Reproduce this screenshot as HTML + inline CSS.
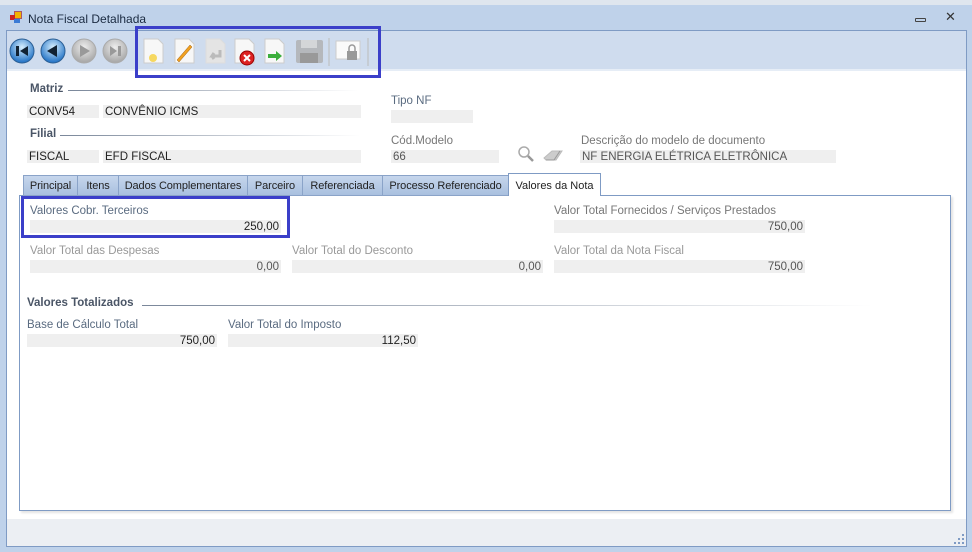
<!DOCTYPE html>
<html><head><meta charset="utf-8"><style>
*{margin:0;padding:0;box-sizing:border-box}
body{width:972px;height:552px;background:#bfd2ea;font-family:"Liberation Sans",sans-serif;font-size:11.5px;color:#222;position:relative;overflow:hidden}
.a{position:absolute;white-space:nowrap}
.f{position:absolute;background:#efefef;height:13px;line-height:14px;padding:0 2px}
.r{text-align:right}
.lbl{color:#777}
.bl{color:#5a6b80}
.h{font-weight:bold;color:#4a5566}
.tab{position:absolute;top:175px;height:21px;background:linear-gradient(#c6d6ec,#a9c0df);border:1px solid #8aa3c8;line-height:20px;text-align:center;color:#222;font-size:11px;letter-spacing:-0.1px}
</style></head><body>
<div class="a" style="left:0;top:0;width:972px;height:5px;background:#dfe6ee"></div>
<div class="a" style="left:10px;top:11px;width:12px;height:12px"><div style="position:absolute;left:4px;top:0;width:8px;height:8px;background:#f2b300;border:1px solid #a56"></div><div style="position:absolute;left:0;top:4px;width:5px;height:5px;background:#c22"></div><div style="position:absolute;left:4px;top:8px;width:6px;height:4px;background:#3a7bd5"></div></div>
<div class="a" style="left:28px;top:12px;font-size:12px;color:#1a2a40">Nota Fiscal Detalhada</div>
<div class="a" style="left:915px;top:18px;width:11px;height:4px;border:1px solid #444;border-radius:1px"></div>
<div class="a" style="left:945px;top:9px;font-size:13px;color:#333">✕</div>
<div class="a" style="left:6px;top:30px;width:961px;height:517px;border:1px solid #7f9bc4;background:#fff"></div>
<div class="a" style="left:7px;top:31px;width:959px;height:40px;background:#cfdcee;border-bottom:2px solid #e6edf6"></div>
<div class="a" style="left:7px;top:519px;width:959px;height:27px;background:#eceff3"></div>
<svg class="a" style="left:9px;top:38px" width="125" height="28">
<defs><radialGradient id="g" cx=".5" cy=".35" r=".6"><stop offset="0" stop-color="#d8f0ff"/><stop offset="1" stop-color="#2a78c8"/></radialGradient>
<radialGradient id="gg" cx=".5" cy=".35" r=".6"><stop offset="0" stop-color="#eee"/><stop offset="1" stop-color="#aaa"/></radialGradient></defs>
<circle cx="13" cy="13" r="12" fill="url(#g)" stroke="#2b5f95"/><rect x="7" y="8" width="3" height="10" fill="#123"/><path d="M19 8 L11 13 L19 18Z" fill="#123"/>
<circle cx="44" cy="13" r="12" fill="url(#g)" stroke="#2b5f95"/><path d="M48 7 L38 13 L48 19Z" fill="#123"/>
<circle cx="75" cy="13" r="12" fill="url(#gg)" stroke="#aaa"/><path d="M71 7 L81 13 L71 19Z" fill="#999"/>
<circle cx="106" cy="13" r="12" fill="url(#gg)" stroke="#aaa"/><path d="M101 8 L108 13 L101 18Z" fill="#999"/><rect x="109" y="8" width="3" height="10" fill="#999"/>
</svg>
<div class="a" style="left:135px;top:26px;width:246px;height:52px;border:3px solid #3b3fc9"></div>
<svg class="a" style="left:140px;top:36px" width="235" height="32">
<g fill="#f7f7f7" stroke="#ccc"><path d="M4 3h14l5 5v19H4Z"/><path d="M35 3h14l5 5v19H35Z"/><path d="M95 3h14l5 5v19H95Z"/><path d="M125 3h14l5 5v19H125Z"/></g>
<path d="M66 3h14l5 5v19H66Z" fill="#e4e4e4" stroke="#ddd"/>
<circle cx="13" cy="22" r="4" fill="#f6d860"/>
<path d="M37 24 L50 9 L52 11 L39 26Z" fill="#f0a020" stroke="#a06010" stroke-width=".5"/>
<path d="M80 14 v6 h-8 l2-3 m-2 3 l2 3" fill="none" stroke="#bbb" stroke-width="3"/>
<circle cx="107" cy="22" r="7" fill="#d22" stroke="#900"/><path d="M104 19l6 6M110 19l-6 6" stroke="#fff" stroke-width="2"/>
<path d="M128 18 h8 v-3 l6 5 -6 5 v-3 h-8Z" fill="#3cae3c"/>
<rect x="156" y="4" width="27" height="23" rx="2" fill="#b5b8bc"/><rect x="161" y="4" width="16" height="8" fill="#d4d6d8"/><rect x="160" y="17" width="18" height="10" fill="#999"/>
<line x1="189" y1="2" x2="189" y2="30" stroke="#bbb"/>
<rect x="196" y="5" width="24" height="18" fill="#fafafa" stroke="#ccc"/><rect x="207" y="15" width="10" height="9" fill="#999"/><path d="M209 15v-3a3 3 0 0 1 6 0v3" fill="none" stroke="#999" stroke-width="1.5"/>
<line x1="228" y1="2" x2="228" y2="30" stroke="#bbb"/>
</svg>
<div class="a h" style="left:30px;top:83px">Matriz</div>
<div class="a" style="left:68px;top:90px;width:290px;height:1px;background:linear-gradient(90deg,#7a879a,#fff)"></div>
<div class="f" style="left:27px;top:105px;width:72px">CONV54</div>
<div class="f" style="left:103px;top:105px;width:258px">CONVÊNIO ICMS</div>
<div class="a h" style="left:30px;top:128px">Filial</div>
<div class="a" style="left:60px;top:135px;width:300px;height:1px;background:linear-gradient(90deg,#7a879a,#fff)"></div>
<div class="f" style="left:27px;top:150px;width:72px">FISCAL</div>
<div class="f" style="left:103px;top:150px;width:258px">EFD FISCAL</div>
<div class="a bl" style="left:391px;top:95px">Tipo NF</div>
<div class="f" style="left:391px;top:110px;width:82px"></div>
<div class="a lbl" style="left:391px;top:135px">Cód.Modelo</div>
<div class="f" style="left:391px;top:150px;width:108px;color:#555">66</div>
<svg class="a" style="left:516px;top:145px" width="56" height="20"><circle cx="8" cy="7" r="5" fill="none" stroke="#aaa" stroke-width="1.5"/><path d="M12 11l5 5" stroke="#999" stroke-width="2.5"/><path d="M28 13l8-7h10l-6 9h-10Z" fill="#ccc" stroke="#bbb"/><path d="M30 15l8 0 6-9" fill="none" stroke="#999"/></svg>
<div class="a lbl" style="left:581px;top:135px">Descrição do modelo de documento</div>
<div class="f" style="left:580px;top:150px;width:256px;color:#555">NF ENERGIA ELÉTRICA ELETRÔNICA</div>
<div class="a" style="left:19px;top:195px;width:932px;height:316px;border:1px solid #7f9bc4;background:#fff;box-shadow:2px 2px 2px #e4e4e4"></div>
<div class="tab" style="left:23px;width:55px">Principal</div>
<div class="tab" style="left:77px;width:42px">Itens</div>
<div class="tab" style="left:118px;width:130px">Dados Complementares</div>
<div class="tab" style="left:247px;width:56px">Parceiro</div>
<div class="tab" style="left:302px;width:81px">Referenciada</div>
<div class="tab" style="left:382px;width:127px">Processo Referenciado</div>
<div class="a" style="left:508px;top:173px;width:93px;height:23px;background:#fff;border:1px solid #7f9bc4;border-bottom:none;line-height:24px;text-align:center;font-size:11px">Valores da Nota</div>
<div class="a" style="left:21px;top:196px;width:269px;height:42px;border:3px solid #3b3fc9"></div>
<div class="a bl" style="left:30px;top:205px">Valores Cobr. Terceiros</div>
<div class="f r" style="left:30px;top:220px;width:251px">250,00</div>
<div class="a lbl" style="left:554px;top:205px">Valor Total Fornecidos / Serviços Prestados</div>
<div class="f r" style="left:554px;top:220px;width:251px;color:#555">750,00</div>
<div class="a lbl" style="left:30px;top:245px;color:#999">Valor Total das Despesas</div>
<div class="f r" style="left:30px;top:260px;width:251px;color:#555">0,00</div>
<div class="a lbl" style="left:292px;top:245px;color:#999">Valor Total do Desconto</div>
<div class="f r" style="left:292px;top:260px;width:251px;color:#555">0,00</div>
<div class="a lbl" style="left:554px;top:245px;color:#999">Valor Total da Nota Fiscal</div>
<div class="f r" style="left:554px;top:260px;width:251px;color:#555">750,00</div>
<div class="a h" style="left:27px;top:297px">Valores Totalizados</div>
<div class="a" style="left:142px;top:305px;width:730px;height:1px;background:linear-gradient(90deg,#7a879a,#fff)"></div>
<div class="a bl" style="left:27px;top:319px">Base de Cálculo Total</div>
<div class="f r" style="left:27px;top:334px;width:190px">750,00</div>
<div class="a bl" style="left:228px;top:319px">Valor Total do Imposto</div>
<div class="f r" style="left:228px;top:334px;width:190px">112,50</div>
<svg class="a" style="left:954px;top:534px" width="12" height="12" fill="#7f9bc4"><rect x="8" y="0" width="2" height="2"/><rect x="4" y="4" width="2" height="2"/><rect x="8" y="4" width="2" height="2"/><rect x="0" y="8" width="2" height="2"/><rect x="4" y="8" width="2" height="2"/><rect x="8" y="8" width="2" height="2"/></svg>
</body></html>
